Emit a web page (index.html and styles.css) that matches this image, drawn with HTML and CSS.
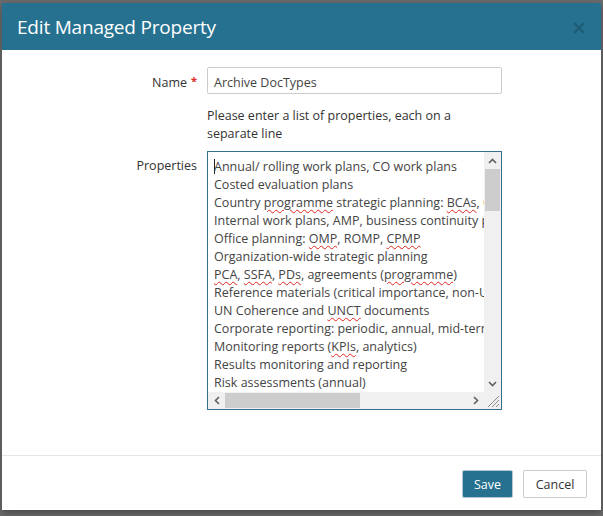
FILE: index.html
```html
<!DOCTYPE html>
<html>
<head>
<meta charset="utf-8">
<link rel="stylesheet" href="styles.css">
</head>
<body>
<div class="modal">
  <div class="modal-header">
    <h1 class="modal-title">Edit Managed Property</h1>
    <span class="close" aria-label="Close">
      <svg width="12" height="12" viewBox="0 0 12 12"><path d="M1 1 L11 11 M11 1 L1 11" stroke="currentColor" stroke-width="2" fill="none"/></svg>
    </span>
  </div>
  <div class="modal-body">
    <div class="form-grid">
      <label class="label label-name">Name<span class="req">*</span></label>
      <div class="input">Archive DocTypes</div>
      <div></div>
      <p class="help">Please enter a list of properties, each on a separate line</p>
      <label class="label label-props">Properties</label>
      <div class="textarea">
        <div class="ta-content">
<div class="line"><span class="caret"></span>Annual/ rolling work plans, CO work plans</div>
<div class="line">Costed evaluation plans</div>
<div class="line">Country <span class="sp">programme</span> strategic planning: <span class="sp">BCAs</span>, CPDs</div>
<div class="line">Internal work plans, AMP, business continuity plans</div>
<div class="line">Office planning: <span class="sp">OMP</span>, ROMP, <span class="sp">CPMP</span></div>
<div class="line">Organization-wide strategic planning</div>
<div class="line"><span class="sp">PCA</span>, <span class="sp">SSFA</span>, <span class="sp">PDs</span>, agreements (<span class="sp">programme</span>)</div>
<div class="line">Reference materials (critical importance, non-UN)</div>
<div class="line">UN Coherence and <span class="sp">UNCT</span> documents</div>
<div class="line">Corporate reporting: periodic, annual, mid-term</div>
<div class="line">Monitoring reports (<span class="sp">KPIs</span>, analytics)</div>
<div class="line">Results monitoring and reporting</div>
<div class="line">Risk assessments (annual)</div>
        </div>
        <div class="vscroll">
          <span class="arrow"><svg width="9" height="6" viewBox="0 0 9 6"><path d="M1 5 L4.5 1.5 L8 5" stroke="#606060" stroke-width="1.6" fill="none"/></svg></span>
          <div class="vtrack"><div class="vthumb"></div></div>
          <span class="arrow"><svg width="9" height="6" viewBox="0 0 9 6"><path d="M1 1 L4.5 4.5 L8 1" stroke="#606060" stroke-width="1.6" fill="none"/></svg></span>
        </div>
        <div class="hscroll">
          <span class="arrow"><svg width="6" height="9" viewBox="0 0 6 9"><path d="M5 1 L1.5 4.5 L5 8" stroke="#606060" stroke-width="1.6" fill="none"/></svg></span>
          <div class="htrack"><div class="hthumb"></div></div>
          <span class="arrow"><svg width="6" height="9" viewBox="0 0 6 9"><path d="M1 1 L4.5 4.5 L1 8" stroke="#606060" stroke-width="1.6" fill="none"/></svg></span>
        </div>
        <div class="grip">
          <svg width="17" height="17" viewBox="0 0 17 17"><path d="M15 4 L4 15 M15 8 L8 15 M15 12 L12 15" stroke="#8a8a8a" stroke-width="1" fill="none"/></svg>
        </div>
      </div>
    </div>
  </div>
  <div class="modal-footer">
    <button class="btn btn-primary">Save</button>
    <button class="btn btn-default">Cancel</button>
  </div>
</div>
</body>
</html>
```

FILE: styles.css
```css
html, body {
  margin: 0;
  padding: 0;
  background: #6c6c6c;
  font-family: "Open Sans", "Noto Sans", sans-serif;
}
body {
  width: 603px;
  height: 516px;
  overflow: hidden;
}
.modal {
  margin: 3px 2px 0 2px;
  width: 599px;
  height: 507px;
  background: #fff;
  display: flex;
  flex-direction: column;
  box-shadow: 0 3px 8px rgba(0,0,0,0.35);
}
.modal-header {
  height: 47px;
  background: #26718f;
  display: flex;
  align-items: center;
  justify-content: space-between;
  padding: 0 16px 0 15px;
  box-sizing: border-box;
}
.modal-title {
  margin: 0;
  font-weight: 400;
  font-size: 19px;
  color: #fff;
  letter-spacing: -0.2px;
}
.close {
  color: #1f5a72;
  opacity: 0.9;
  display: flex;
  margin-top: 2px;
}
.modal-body {
  flex: 1;
  padding-top: 17px;
}
.form-grid {
  display: grid;
  grid-template-columns: 195px 295px;
  column-gap: 10px;
  color: #333;
  font-size: 12.5px;
}
.label {
  text-align: right;
  line-height: 18px;
}
.label-name {
  padding-top: 7px;
}
.req {
  color: #e0281d;
  margin-left: 4px;
  font-size: 11px;
  font-weight: 700;
  position: relative;
  top: -2px;
}
.label-props {
  padding-top: 6px;
}
.input {
  height: 27px;
  box-sizing: border-box;
  border: 1px solid #cccccc;
  border-radius: 2px;
  padding: 0 6px;
  line-height: 29px;
  color: #444;
}
.help {
  margin: 13px 0 8px 0;
  line-height: 18px;
  color: #333;
}
.textarea {
  height: 259px;
  box-sizing: border-box;
  border: 1px solid #33708f;
  display: grid;
  grid-template-columns: 276px 17px;
  grid-template-rows: 240px 17px;
  background: #fff;
}
.ta-content {
  overflow: hidden;
  padding: 6px 0 0 6px;
  color: #444;
}
.line {
  white-space: pre;
  line-height: 18px;
  height: 18px;
}
.caret {
  display: inline-block;
  width: 1px;
  height: 15px;
  background: #222;
  vertical-align: -3px;
  margin-right: -1px;
}
.sp {
  text-decoration: underline wavy #e0281d;
  text-decoration-thickness: 1px;
  text-underline-offset: 2px;
}
.vscroll {
  background: #f0f0f0;
  display: flex;
  flex-direction: column;
}
.vscroll .arrow {
  height: 17px;
  display: flex;
  align-items: center;
  justify-content: center;
}
.vtrack {
  flex: 1;
  padding: 0 1px;
}
.vthumb {
  height: 42px;
  background: #cdcdcd;
}
.hscroll {
  background: #f0f0f0;
  display: flex;
}
.hscroll .arrow {
  width: 17px;
  display: flex;
  align-items: center;
  justify-content: center;
}
.htrack {
  flex: 1;
  padding: 1px 0;
}
.hthumb {
  width: 135px;
  height: 100%;
  background: #cdcdcd;
}
.grip {
  background: #f0f0f0;
  display: flex;
}
.modal-footer {
  border-top: 1px solid #e5e5e5;
  height: 55px;
  display: flex;
  justify-content: flex-end;
  align-items: flex-start;
  padding: 14px 14px 0 0;
  gap: 10px;
  box-sizing: border-box;
}
.btn {
  font-family: "Open Sans", "Noto Sans", sans-serif;
  font-size: 12.5px;
  height: 28px;
  border-radius: 2px;
  padding: 0 10px;
  cursor: pointer;
}
.btn-primary {
  background: #26718f;
  color: #fff;
  border: 1px solid #b4c6ce;
  width: 51px;
}
.btn-default {
  background: #fff;
  color: #333;
  border: 1px solid #cccccc;
  width: 64px;
}
```
